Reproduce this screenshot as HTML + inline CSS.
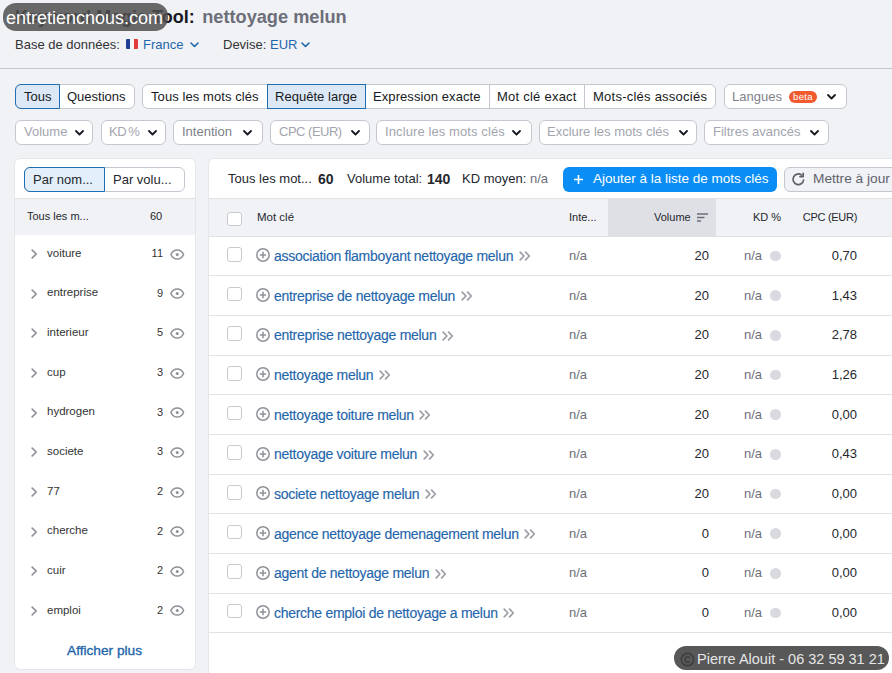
<!DOCTYPE html>
<html><head><meta charset="utf-8">
<style>
*{box-sizing:border-box;margin:0;padding:0}
html,body{width:892px;height:673px;overflow:hidden}
body{background:#f1f2f6;font-family:"Liberation Sans",sans-serif;color:#25272d;position:relative}
.a{position:absolute;white-space:nowrap}
svg{display:block}
.title{left:15px;top:6px;font-size:18px;font-weight:bold;color:#171a22;line-height:22px}
.title .q{color:#6c6e79}
.wm{border-radius:13px;background:rgba(80,80,80,0.9);color:#fff}
.db{top:37px;font-size:13px;color:#333;line-height:16px}
.blue{color:#1f66ab}
.hr{left:0;top:68px;width:892px;height:1px;background:#c6c7cc}
.sg{position:absolute;top:84px;height:25px;border:1px solid #c4c7cf;border-radius:6px;background:#fff}
.sgi{position:absolute;top:-1px;height:25px;line-height:25px;font-size:13px;color:#171a22;white-space:nowrap}
.sgd{position:absolute;top:0;width:1px;height:23px;background:#c4c7cf}
.on{background:#dce8f5;border:1px solid #1f6db3}
.dd{position:absolute;top:120px;height:25px;border:1px solid #c4c7cf;border-radius:6px;background:#fff;font-size:13px;color:#a3a5ae;line-height:21px;white-space:nowrap}
.dd span{position:absolute;top:0}

.panel{position:absolute;left:15px;top:159px;width:180px;height:510px;background:#fff;border-radius:5px;box-shadow:0 0 0 1px #e5e6e9}
.tbl{position:absolute;left:209px;top:159px;width:700px;height:530px;background:#fff;border-radius:5px 0 0 0;box-shadow:0 0 0 1px #e5e6e9}
.t13{font-size:13px;line-height:16px}
.t11{font-size:11px;line-height:14px}
.line{position:absolute;left:209px;width:683px;height:1px;background:#e1e2e5}
.cb{position:absolute;width:14.5px;height:14.5px;border:1px solid #c9cacf;border-radius:3px;background:#fff}
.lk{font-size:14px;letter-spacing:-0.28px;color:#1f66ab;line-height:16px;-webkit-text-stroke:0.15px #1f66ab}
.na{color:#6c6e79}
.dot{position:absolute;width:10.5px;height:10.5px;border-radius:50%;background:#d9dadf}
</style></head><body>

<div class="a title">Keyword Magic Tool: <span class="q" style="margin-left:2.5px;font-size:18.2px">nettoyage melun</span></div>
<div class="a wm" style="left:3px;top:3px;width:165px;height:28px;background:rgba(80,80,80,0.85)"></div>
<div class="a" style="left:6px;top:7px;font-size:18px;line-height:22px;color:#fff">entretiencnous.com</div>
<div class="a db" style="left:15px">Base de données:</div>
<div class="a" style="left:126px;top:39px;width:12px;height:10px;display:flex;border-radius:1px;overflow:hidden"><div style="flex:1;background:#1f3f97"></div><div style="flex:1;background:#f5f5f5"></div><div style="flex:1;background:#e33b3b"></div></div>
<div class="a db blue" style="left:143px">France</div>
<div class="a" style="left:190px;top:42px"><svg width="9" height="6" viewBox="0 0 9 6"><path d="M1 1l3.5 3.5L8 1" fill="none" stroke="#1f66ab" stroke-width="1.6" stroke-linecap="round" stroke-linejoin="round"/></svg></div>
<div class="a db" style="left:223px">Devise:</div>
<div class="a db blue" style="left:270px">EUR</div>
<div class="a" style="left:301px;top:42px"><svg width="9" height="6" viewBox="0 0 9 6"><path d="M1 1l3.5 3.5L8 1" fill="none" stroke="#1f66ab" stroke-width="1.6" stroke-linecap="round" stroke-linejoin="round"/></svg></div>
<div class="a hr"></div>
<div class="sg" style="left:15px;width:120px">
<div class="a on" style="left:-1px;top:-1px;width:45px;height:25px;border-radius:6px 0 0 6px"></div>
<div class="sgi" style="left:8px">Tous</div>
<div class="sgi" style="left:51px">Questions</div>
</div>
<div class="sg" style="left:142px;width:574px">
<div class="a on" style="left:124px;top:-1px;width:99px;height:25px"></div>
<div class="sgi" style="left:8px;letter-spacing:0.08px">Tous les mots clés</div>
<div class="sgi" style="left:132px;letter-spacing:0.03px">Requête large</div>
<div class="sgi" style="left:230px;letter-spacing:0.08px">Expression exacte</div>
<div class="sgi" style="left:354px;letter-spacing:0.24px">Mot clé exact</div>
<div class="sgi" style="left:450px;letter-spacing:0.24px">Mots-clés associés</div>
<div class="sgd" style="left:346px"></div>
<div class="sgd" style="left:441px"></div>
</div>
<div class="sg" style="left:724px;width:123px">
<div class="sgi" style="left:7px;color:#7f818a">Langues</div>
<div class="a" style="left:64px;top:5.5px;width:28px;height:12.5px;border-radius:6px;background:#f25a30;color:#fff;font-size:9.5px;line-height:12.5px;letter-spacing:0.4px;text-align:center">beta</div>
<div class="a" style="left:102px;top:9px"><svg width="9" height="6" viewBox="0 0 9 6"><path d="M1 1l3.5 3.5L8 1" fill="none" stroke="#171a22" stroke-width="1.8" stroke-linecap="round" stroke-linejoin="round"/></svg></div>
</div>
<div class="dd" style="left:15px;width:78px;color:#a3a5ae"><span style="left:8px;letter-spacing:0">Volume</span><div class="a" style="left:59px;top:9px"><svg width="9" height="6" viewBox="0 0 9 6"><path d="M1 1l3.5 3.5L8 1" fill="none" stroke="#171a22" stroke-width="1.8" stroke-linecap="round" stroke-linejoin="round"/></svg></div></div>
<div class="dd" style="left:101px;width:65px;color:#a3a5ae"><span style="left:7px;letter-spacing:-0.3px;word-spacing:-1.5px">KD %</span><div class="a" style="left:46px;top:9px"><svg width="9" height="6" viewBox="0 0 9 6"><path d="M1 1l3.5 3.5L8 1" fill="none" stroke="#171a22" stroke-width="1.8" stroke-linecap="round" stroke-linejoin="round"/></svg></div></div>
<div class="dd" style="left:173px;width:90px;color:#7d7f88"><span style="left:8px;letter-spacing:0">Intention</span><div class="a" style="left:69px;top:9px"><svg width="9" height="6" viewBox="0 0 9 6"><path d="M1 1l3.5 3.5L8 1" fill="none" stroke="#171a22" stroke-width="1.8" stroke-linecap="round" stroke-linejoin="round"/></svg></div></div>
<div class="dd" style="left:270px;width:100px;color:#a3a5ae"><span style="left:8px;letter-spacing:-0.5px">CPC (EUR)</span><div class="a" style="left:80px;top:9px"><svg width="9" height="6" viewBox="0 0 9 6"><path d="M1 1l3.5 3.5L8 1" fill="none" stroke="#171a22" stroke-width="1.8" stroke-linecap="round" stroke-linejoin="round"/></svg></div></div>
<div class="dd" style="left:376px;width:156px;color:#a3a5ae"><span style="left:8px;letter-spacing:0.1px">Inclure les mots clés</span><div class="a" style="left:135px;top:9px"><svg width="9" height="6" viewBox="0 0 9 6"><path d="M1 1l3.5 3.5L8 1" fill="none" stroke="#171a22" stroke-width="1.8" stroke-linecap="round" stroke-linejoin="round"/></svg></div></div>
<div class="dd" style="left:539px;width:158px;color:#a3a5ae"><span style="left:7px;letter-spacing:0">Exclure les mots clés</span><div class="a" style="left:139px;top:9px"><svg width="9" height="6" viewBox="0 0 9 6"><path d="M1 1l3.5 3.5L8 1" fill="none" stroke="#171a22" stroke-width="1.8" stroke-linecap="round" stroke-linejoin="round"/></svg></div></div>
<div class="dd" style="left:704px;width:125px;color:#a3a5ae"><span style="left:8px;letter-spacing:0">Filtres avancés</span><div class="a" style="left:105px;top:9px"><svg width="9" height="6" viewBox="0 0 9 6"><path d="M1 1l3.5 3.5L8 1" fill="none" stroke="#171a22" stroke-width="1.8" stroke-linecap="round" stroke-linejoin="round"/></svg></div></div>
<div class="panel"></div>
<div class="a" style="left:24px;top:167px;width:161px;height:25px;border:1px solid #c4c7cf;border-radius:6px;background:#fff"></div>
<div class="a" style="left:24px;top:167px;width:81px;height:25px;border:1px solid #1f6db3;border-radius:6px 0 0 6px;background:#e3effa"></div>
<div class="a t13" style="left:33px;top:172px">Par nom...</div>
<div class="a t13" style="left:113px;top:172px">Par volu...</div>
<div class="a" style="left:15px;top:198px;width:180px;height:1px;background:#e1e2e5"></div>
<div class="a" style="left:15px;top:199px;width:180px;height:36px;background:#f1f2f6"></div>
<div class="a t11" style="left:27px;top:209px">Tous les m...</div>
<div class="a t11" style="left:150px;top:209px">60</div>
<div class="a" style="left:31px;top:249.0px"><svg width="7" height="10" viewBox="0 0 7 10"><path d="M1.2 1.2l4 3.8-4 3.8" fill="none" stroke="#8f9199" stroke-width="1.7" stroke-linecap="round" stroke-linejoin="round"/></svg></div>
<div class="a t11" style="left:47px;top:245.7px;color:#333;font-size:11.5px">voiture</div>
<div class="a t11" style="right:729px;top:246.0px;color:#333">11</div>
<div class="a" style="left:169.6px;top:248.5px"><svg width="15" height="11" viewBox="0 0 15 11"><path d="M0.9 5.5C2.3 2.3 4.6 0.9 7.25 0.9s4.95 1.4 6.35 4.6c-1.4 3.2-3.7 4.6-6.35 4.6S2.3 8.7 0.9 5.5z" fill="none" stroke="#8f9199" stroke-width="1.5"/><circle cx="7.25" cy="5.5" r="1.5" fill="#8f9199"/></svg></div>
<div class="a" style="left:31px;top:288.7px"><svg width="7" height="10" viewBox="0 0 7 10"><path d="M1.2 1.2l4 3.8-4 3.8" fill="none" stroke="#8f9199" stroke-width="1.7" stroke-linecap="round" stroke-linejoin="round"/></svg></div>
<div class="a t11" style="left:47px;top:285.4px;color:#333;font-size:11.5px">entreprise</div>
<div class="a t11" style="right:729px;top:285.7px;color:#333">9</div>
<div class="a" style="left:169.6px;top:288.2px"><svg width="15" height="11" viewBox="0 0 15 11"><path d="M0.9 5.5C2.3 2.3 4.6 0.9 7.25 0.9s4.95 1.4 6.35 4.6c-1.4 3.2-3.7 4.6-6.35 4.6S2.3 8.7 0.9 5.5z" fill="none" stroke="#8f9199" stroke-width="1.5"/><circle cx="7.25" cy="5.5" r="1.5" fill="#8f9199"/></svg></div>
<div class="a" style="left:31px;top:328.3px"><svg width="7" height="10" viewBox="0 0 7 10"><path d="M1.2 1.2l4 3.8-4 3.8" fill="none" stroke="#8f9199" stroke-width="1.7" stroke-linecap="round" stroke-linejoin="round"/></svg></div>
<div class="a t11" style="left:47px;top:325.0px;color:#333;font-size:11.5px">interieur</div>
<div class="a t11" style="right:729px;top:325.3px;color:#333">5</div>
<div class="a" style="left:169.6px;top:327.8px"><svg width="15" height="11" viewBox="0 0 15 11"><path d="M0.9 5.5C2.3 2.3 4.6 0.9 7.25 0.9s4.95 1.4 6.35 4.6c-1.4 3.2-3.7 4.6-6.35 4.6S2.3 8.7 0.9 5.5z" fill="none" stroke="#8f9199" stroke-width="1.5"/><circle cx="7.25" cy="5.5" r="1.5" fill="#8f9199"/></svg></div>
<div class="a" style="left:31px;top:368.0px"><svg width="7" height="10" viewBox="0 0 7 10"><path d="M1.2 1.2l4 3.8-4 3.8" fill="none" stroke="#8f9199" stroke-width="1.7" stroke-linecap="round" stroke-linejoin="round"/></svg></div>
<div class="a t11" style="left:47px;top:364.7px;color:#333;font-size:11.5px">cup</div>
<div class="a t11" style="right:729px;top:365.0px;color:#333">3</div>
<div class="a" style="left:169.6px;top:367.5px"><svg width="15" height="11" viewBox="0 0 15 11"><path d="M0.9 5.5C2.3 2.3 4.6 0.9 7.25 0.9s4.95 1.4 6.35 4.6c-1.4 3.2-3.7 4.6-6.35 4.6S2.3 8.7 0.9 5.5z" fill="none" stroke="#8f9199" stroke-width="1.5"/><circle cx="7.25" cy="5.5" r="1.5" fill="#8f9199"/></svg></div>
<div class="a" style="left:31px;top:407.6px"><svg width="7" height="10" viewBox="0 0 7 10"><path d="M1.2 1.2l4 3.8-4 3.8" fill="none" stroke="#8f9199" stroke-width="1.7" stroke-linecap="round" stroke-linejoin="round"/></svg></div>
<div class="a t11" style="left:47px;top:404.3px;color:#333;font-size:11.5px">hydrogen</div>
<div class="a t11" style="right:729px;top:404.6px;color:#333">3</div>
<div class="a" style="left:169.6px;top:407.1px"><svg width="15" height="11" viewBox="0 0 15 11"><path d="M0.9 5.5C2.3 2.3 4.6 0.9 7.25 0.9s4.95 1.4 6.35 4.6c-1.4 3.2-3.7 4.6-6.35 4.6S2.3 8.7 0.9 5.5z" fill="none" stroke="#8f9199" stroke-width="1.5"/><circle cx="7.25" cy="5.5" r="1.5" fill="#8f9199"/></svg></div>
<div class="a" style="left:31px;top:447.3px"><svg width="7" height="10" viewBox="0 0 7 10"><path d="M1.2 1.2l4 3.8-4 3.8" fill="none" stroke="#8f9199" stroke-width="1.7" stroke-linecap="round" stroke-linejoin="round"/></svg></div>
<div class="a t11" style="left:47px;top:444.0px;color:#333;font-size:11.5px">societe</div>
<div class="a t11" style="right:729px;top:444.3px;color:#333">3</div>
<div class="a" style="left:169.6px;top:446.8px"><svg width="15" height="11" viewBox="0 0 15 11"><path d="M0.9 5.5C2.3 2.3 4.6 0.9 7.25 0.9s4.95 1.4 6.35 4.6c-1.4 3.2-3.7 4.6-6.35 4.6S2.3 8.7 0.9 5.5z" fill="none" stroke="#8f9199" stroke-width="1.5"/><circle cx="7.25" cy="5.5" r="1.5" fill="#8f9199"/></svg></div>
<div class="a" style="left:31px;top:487.0px"><svg width="7" height="10" viewBox="0 0 7 10"><path d="M1.2 1.2l4 3.8-4 3.8" fill="none" stroke="#8f9199" stroke-width="1.7" stroke-linecap="round" stroke-linejoin="round"/></svg></div>
<div class="a t11" style="left:47px;top:483.7px;color:#333;font-size:11.5px">77</div>
<div class="a t11" style="right:729px;top:484.0px;color:#333">2</div>
<div class="a" style="left:169.6px;top:486.5px"><svg width="15" height="11" viewBox="0 0 15 11"><path d="M0.9 5.5C2.3 2.3 4.6 0.9 7.25 0.9s4.95 1.4 6.35 4.6c-1.4 3.2-3.7 4.6-6.35 4.6S2.3 8.7 0.9 5.5z" fill="none" stroke="#8f9199" stroke-width="1.5"/><circle cx="7.25" cy="5.5" r="1.5" fill="#8f9199"/></svg></div>
<div class="a" style="left:31px;top:526.6px"><svg width="7" height="10" viewBox="0 0 7 10"><path d="M1.2 1.2l4 3.8-4 3.8" fill="none" stroke="#8f9199" stroke-width="1.7" stroke-linecap="round" stroke-linejoin="round"/></svg></div>
<div class="a t11" style="left:47px;top:523.3px;color:#333;font-size:11.5px">cherche</div>
<div class="a t11" style="right:729px;top:523.6px;color:#333">2</div>
<div class="a" style="left:169.6px;top:526.1px"><svg width="15" height="11" viewBox="0 0 15 11"><path d="M0.9 5.5C2.3 2.3 4.6 0.9 7.25 0.9s4.95 1.4 6.35 4.6c-1.4 3.2-3.7 4.6-6.35 4.6S2.3 8.7 0.9 5.5z" fill="none" stroke="#8f9199" stroke-width="1.5"/><circle cx="7.25" cy="5.5" r="1.5" fill="#8f9199"/></svg></div>
<div class="a" style="left:31px;top:566.3px"><svg width="7" height="10" viewBox="0 0 7 10"><path d="M1.2 1.2l4 3.8-4 3.8" fill="none" stroke="#8f9199" stroke-width="1.7" stroke-linecap="round" stroke-linejoin="round"/></svg></div>
<div class="a t11" style="left:47px;top:563.0px;color:#333;font-size:11.5px">cuir</div>
<div class="a t11" style="right:729px;top:563.3px;color:#333">2</div>
<div class="a" style="left:169.6px;top:565.8px"><svg width="15" height="11" viewBox="0 0 15 11"><path d="M0.9 5.5C2.3 2.3 4.6 0.9 7.25 0.9s4.95 1.4 6.35 4.6c-1.4 3.2-3.7 4.6-6.35 4.6S2.3 8.7 0.9 5.5z" fill="none" stroke="#8f9199" stroke-width="1.5"/><circle cx="7.25" cy="5.5" r="1.5" fill="#8f9199"/></svg></div>
<div class="a" style="left:31px;top:605.9px"><svg width="7" height="10" viewBox="0 0 7 10"><path d="M1.2 1.2l4 3.8-4 3.8" fill="none" stroke="#8f9199" stroke-width="1.7" stroke-linecap="round" stroke-linejoin="round"/></svg></div>
<div class="a t11" style="left:47px;top:602.6px;color:#333;font-size:11.5px">emploi</div>
<div class="a t11" style="right:729px;top:602.9px;color:#333">2</div>
<div class="a" style="left:169.6px;top:605.4px"><svg width="15" height="11" viewBox="0 0 15 11"><path d="M0.9 5.5C2.3 2.3 4.6 0.9 7.25 0.9s4.95 1.4 6.35 4.6c-1.4 3.2-3.7 4.6-6.35 4.6S2.3 8.7 0.9 5.5z" fill="none" stroke="#8f9199" stroke-width="1.5"/><circle cx="7.25" cy="5.5" r="1.5" fill="#8f9199"/></svg></div>
<div class="a" style="left:67px;top:643px;font-size:13.7px;line-height:16px;color:#1f66ab;-webkit-text-stroke:0.35px #1f66ab">Afficher plus</div>
<div class="tbl"></div>
<div class="a t13" style="left:228px;top:171px">Tous les mot...</div>
<div class="a" style="left:318px;top:171px;font-size:14px;line-height:16px;font-weight:bold">60</div>
<div class="a t13" style="left:347px;top:171px">Volume total:</div>
<div class="a" style="left:427px;top:171px;font-size:14px;line-height:16px;font-weight:bold">140</div>
<div class="a t13" style="left:462px;top:171px">KD moyen: <span class="na">n/a</span></div>
<div class="a" style="left:563px;top:167px;width:214px;height:25px;border-radius:6px;background:#0a8ef5"></div>
<div class="a" style="left:574px;top:175px"><svg width="9" height="9" viewBox="0 0 9 9"><path d="M4.5 0v9M0 4.5h9" stroke="#fff" stroke-width="1.6"/></svg></div>
<div class="a" style="left:593px;top:171px;font-size:13.5px;line-height:16px;color:#fff">Ajouter à la liste de mots clés</div>
<div class="a" style="left:784px;top:167px;width:120px;height:25px;border-radius:6px;background:#f1f2f6;border:1px solid #c4c7cf"></div>
<div class="a" style="left:791px;top:172px"><svg width="15" height="15" viewBox="0 0 15 15"><path d="M12.6 8A5.3 5.3 0 1 1 10.6 3.1" fill="none" stroke="#5f616a" stroke-width="1.7" stroke-linecap="round"/><path d="M12.2 1.4v3.2H9" fill="none" stroke="#5f616a" stroke-width="1.7" stroke-linecap="round" stroke-linejoin="round"/></svg></div>
<div class="a" style="left:813px;top:171px;font-size:13.7px;line-height:16px;color:#5f616a">Mettre à jour</div>
<div class="a" style="left:209px;top:198px;width:683px;height:1px;background:#e1e2e5"></div>
<div class="a" style="left:209px;top:199px;width:683px;height:37px;background:#f1f2f6"></div>
<div class="a" style="left:608px;top:199px;width:108px;height:37px;background:#dfe0e6"></div>
<div class="a" style="left:209px;top:236px;width:683px;height:1px;background:#e1e2e5"></div>
<div class="cb" style="left:227px;top:211.6px"></div>
<div class="a t11" style="left:257px;top:209.6px;font-size:11.5px">Mot clé</div>
<div class="a t11" style="left:569px;top:210px">Inte...</div>
<div class="a t11" style="left:654px;top:210px">Volume</div>
<div class="a" style="left:697px;top:213px"><svg width="11" height="9" viewBox="0 0 11 9"><path d="M0 1h11M0 4.5h7.5M0 8h4" stroke="#6c6e79" stroke-width="1.5"/></svg></div>
<div class="a t11" style="right:111px;top:210px">KD %</div>
<div class="a t11" style="right:35px;top:210px;letter-spacing:-0.3px">CPC (EUR)</div>
<div class="line" style="top:275px"></div>
<div class="cb" style="left:227px;top:247.0px"></div>
<div class="a" style="left:256px;top:248.3px"><svg width="15" height="15" viewBox="0 0 15 15"><circle cx="7" cy="7" r="6.2" fill="none" stroke="#8f9199" stroke-width="1.5"/><path d="M7 3.8v6.4M3.8 7h6.4" stroke="#8f9199" stroke-width="1.5"/></svg></div>
<div class="a lk" style="left:274px;top:248.0px">association flamboyant nettoyage melun<span style="display:inline-block;vertical-align:middle;margin-left:5.5px;margin-top:-2px"><svg width="12" height="10" viewBox="0 0 12 10"><path d="M1.2 1.2l3.7 3.8-3.7 3.8M6.6 1.2l3.7 3.8-3.7 3.8" fill="none" stroke="#9c9ea6" stroke-width="1.7" stroke-linecap="round" stroke-linejoin="round"/></svg></span></div>
<div class="a na t13" style="left:569px;top:248.0px">n/a</div>
<div class="a t13" style="right:183px;top:248.0px">20</div>
<div class="a na t13" style="left:744px;top:248.0px">n/a</div>
<div class="dot" style="left:770px;top:250.7px"></div>
<div class="a t13" style="right:35px;top:248.0px">0,70</div>
<div class="line" style="top:315px"></div>
<div class="cb" style="left:227px;top:286.7px"></div>
<div class="a" style="left:256px;top:288.0px"><svg width="15" height="15" viewBox="0 0 15 15"><circle cx="7" cy="7" r="6.2" fill="none" stroke="#8f9199" stroke-width="1.5"/><path d="M7 3.8v6.4M3.8 7h6.4" stroke="#8f9199" stroke-width="1.5"/></svg></div>
<div class="a lk" style="left:274px;top:287.7px">entreprise de nettoyage melun<span style="display:inline-block;vertical-align:middle;margin-left:5.5px;margin-top:-2px"><svg width="12" height="10" viewBox="0 0 12 10"><path d="M1.2 1.2l3.7 3.8-3.7 3.8M6.6 1.2l3.7 3.8-3.7 3.8" fill="none" stroke="#9c9ea6" stroke-width="1.7" stroke-linecap="round" stroke-linejoin="round"/></svg></span></div>
<div class="a na t13" style="left:569px;top:287.7px">n/a</div>
<div class="a t13" style="right:183px;top:287.7px">20</div>
<div class="a na t13" style="left:744px;top:287.7px">n/a</div>
<div class="dot" style="left:770px;top:290.4px"></div>
<div class="a t13" style="right:35px;top:287.7px">1,43</div>
<div class="line" style="top:355px"></div>
<div class="cb" style="left:227px;top:326.3px"></div>
<div class="a" style="left:256px;top:327.6px"><svg width="15" height="15" viewBox="0 0 15 15"><circle cx="7" cy="7" r="6.2" fill="none" stroke="#8f9199" stroke-width="1.5"/><path d="M7 3.8v6.4M3.8 7h6.4" stroke="#8f9199" stroke-width="1.5"/></svg></div>
<div class="a lk" style="left:274px;top:327.3px">entreprise nettoyage melun<span style="display:inline-block;vertical-align:middle;margin-left:5.5px;margin-top:-2px"><svg width="12" height="10" viewBox="0 0 12 10"><path d="M1.2 1.2l3.7 3.8-3.7 3.8M6.6 1.2l3.7 3.8-3.7 3.8" fill="none" stroke="#9c9ea6" stroke-width="1.7" stroke-linecap="round" stroke-linejoin="round"/></svg></span></div>
<div class="a na t13" style="left:569px;top:327.3px">n/a</div>
<div class="a t13" style="right:183px;top:327.3px">20</div>
<div class="a na t13" style="left:744px;top:327.3px">n/a</div>
<div class="dot" style="left:770px;top:330.0px"></div>
<div class="a t13" style="right:35px;top:327.3px">2,78</div>
<div class="line" style="top:394px"></div>
<div class="cb" style="left:227px;top:366.0px"></div>
<div class="a" style="left:256px;top:367.3px"><svg width="15" height="15" viewBox="0 0 15 15"><circle cx="7" cy="7" r="6.2" fill="none" stroke="#8f9199" stroke-width="1.5"/><path d="M7 3.8v6.4M3.8 7h6.4" stroke="#8f9199" stroke-width="1.5"/></svg></div>
<div class="a lk" style="left:274px;top:367.0px">nettoyage melun<span style="display:inline-block;vertical-align:middle;margin-left:5.5px;margin-top:-2px"><svg width="12" height="10" viewBox="0 0 12 10"><path d="M1.2 1.2l3.7 3.8-3.7 3.8M6.6 1.2l3.7 3.8-3.7 3.8" fill="none" stroke="#9c9ea6" stroke-width="1.7" stroke-linecap="round" stroke-linejoin="round"/></svg></span></div>
<div class="a na t13" style="left:569px;top:367.0px">n/a</div>
<div class="a t13" style="right:183px;top:367.0px">20</div>
<div class="a na t13" style="left:744px;top:367.0px">n/a</div>
<div class="dot" style="left:770px;top:369.7px"></div>
<div class="a t13" style="right:35px;top:367.0px">1,26</div>
<div class="line" style="top:434px"></div>
<div class="cb" style="left:227px;top:405.6px"></div>
<div class="a" style="left:256px;top:406.9px"><svg width="15" height="15" viewBox="0 0 15 15"><circle cx="7" cy="7" r="6.2" fill="none" stroke="#8f9199" stroke-width="1.5"/><path d="M7 3.8v6.4M3.8 7h6.4" stroke="#8f9199" stroke-width="1.5"/></svg></div>
<div class="a lk" style="left:274px;top:406.6px">nettoyage toiture melun<span style="display:inline-block;vertical-align:middle;margin-left:5.5px;margin-top:-2px"><svg width="12" height="10" viewBox="0 0 12 10"><path d="M1.2 1.2l3.7 3.8-3.7 3.8M6.6 1.2l3.7 3.8-3.7 3.8" fill="none" stroke="#9c9ea6" stroke-width="1.7" stroke-linecap="round" stroke-linejoin="round"/></svg></span></div>
<div class="a na t13" style="left:569px;top:406.6px">n/a</div>
<div class="a t13" style="right:183px;top:406.6px">20</div>
<div class="a na t13" style="left:744px;top:406.6px">n/a</div>
<div class="dot" style="left:770px;top:409.3px"></div>
<div class="a t13" style="right:35px;top:406.6px">0,00</div>
<div class="line" style="top:474px"></div>
<div class="cb" style="left:227px;top:445.3px"></div>
<div class="a" style="left:256px;top:446.6px"><svg width="15" height="15" viewBox="0 0 15 15"><circle cx="7" cy="7" r="6.2" fill="none" stroke="#8f9199" stroke-width="1.5"/><path d="M7 3.8v6.4M3.8 7h6.4" stroke="#8f9199" stroke-width="1.5"/></svg></div>
<div class="a lk" style="left:274px;top:446.3px">nettoyage voiture melun<span style="display:inline-block;vertical-align:middle;margin-left:5.5px;margin-top:-2px"><svg width="12" height="10" viewBox="0 0 12 10"><path d="M1.2 1.2l3.7 3.8-3.7 3.8M6.6 1.2l3.7 3.8-3.7 3.8" fill="none" stroke="#9c9ea6" stroke-width="1.7" stroke-linecap="round" stroke-linejoin="round"/></svg></span></div>
<div class="a na t13" style="left:569px;top:446.3px">n/a</div>
<div class="a t13" style="right:183px;top:446.3px">20</div>
<div class="a na t13" style="left:744px;top:446.3px">n/a</div>
<div class="dot" style="left:770px;top:449.0px"></div>
<div class="a t13" style="right:35px;top:446.3px">0,43</div>
<div class="line" style="top:513px"></div>
<div class="cb" style="left:227px;top:485.0px"></div>
<div class="a" style="left:256px;top:486.3px"><svg width="15" height="15" viewBox="0 0 15 15"><circle cx="7" cy="7" r="6.2" fill="none" stroke="#8f9199" stroke-width="1.5"/><path d="M7 3.8v6.4M3.8 7h6.4" stroke="#8f9199" stroke-width="1.5"/></svg></div>
<div class="a lk" style="left:274px;top:486.0px">societe nettoyage melun<span style="display:inline-block;vertical-align:middle;margin-left:5.5px;margin-top:-2px"><svg width="12" height="10" viewBox="0 0 12 10"><path d="M1.2 1.2l3.7 3.8-3.7 3.8M6.6 1.2l3.7 3.8-3.7 3.8" fill="none" stroke="#9c9ea6" stroke-width="1.7" stroke-linecap="round" stroke-linejoin="round"/></svg></span></div>
<div class="a na t13" style="left:569px;top:486.0px">n/a</div>
<div class="a t13" style="right:183px;top:486.0px">20</div>
<div class="a na t13" style="left:744px;top:486.0px">n/a</div>
<div class="dot" style="left:770px;top:488.7px"></div>
<div class="a t13" style="right:35px;top:486.0px">0,00</div>
<div class="line" style="top:553px"></div>
<div class="cb" style="left:227px;top:524.6px"></div>
<div class="a" style="left:256px;top:525.9px"><svg width="15" height="15" viewBox="0 0 15 15"><circle cx="7" cy="7" r="6.2" fill="none" stroke="#8f9199" stroke-width="1.5"/><path d="M7 3.8v6.4M3.8 7h6.4" stroke="#8f9199" stroke-width="1.5"/></svg></div>
<div class="a lk" style="left:274px;top:525.6px">agence nettoyage demenagement melun<span style="display:inline-block;vertical-align:middle;margin-left:5.5px;margin-top:-2px"><svg width="12" height="10" viewBox="0 0 12 10"><path d="M1.2 1.2l3.7 3.8-3.7 3.8M6.6 1.2l3.7 3.8-3.7 3.8" fill="none" stroke="#9c9ea6" stroke-width="1.7" stroke-linecap="round" stroke-linejoin="round"/></svg></span></div>
<div class="a na t13" style="left:569px;top:525.6px">n/a</div>
<div class="a t13" style="right:183px;top:525.6px">0</div>
<div class="a na t13" style="left:744px;top:525.6px">n/a</div>
<div class="dot" style="left:770px;top:528.3px"></div>
<div class="a t13" style="right:35px;top:525.6px">0,00</div>
<div class="line" style="top:593px"></div>
<div class="cb" style="left:227px;top:564.3px"></div>
<div class="a" style="left:256px;top:565.6px"><svg width="15" height="15" viewBox="0 0 15 15"><circle cx="7" cy="7" r="6.2" fill="none" stroke="#8f9199" stroke-width="1.5"/><path d="M7 3.8v6.4M3.8 7h6.4" stroke="#8f9199" stroke-width="1.5"/></svg></div>
<div class="a lk" style="left:274px;top:565.3px">agent de nettoyage melun<span style="display:inline-block;vertical-align:middle;margin-left:5.5px;margin-top:-2px"><svg width="12" height="10" viewBox="0 0 12 10"><path d="M1.2 1.2l3.7 3.8-3.7 3.8M6.6 1.2l3.7 3.8-3.7 3.8" fill="none" stroke="#9c9ea6" stroke-width="1.7" stroke-linecap="round" stroke-linejoin="round"/></svg></span></div>
<div class="a na t13" style="left:569px;top:565.3px">n/a</div>
<div class="a t13" style="right:183px;top:565.3px">0</div>
<div class="a na t13" style="left:744px;top:565.3px">n/a</div>
<div class="dot" style="left:770px;top:568.0px"></div>
<div class="a t13" style="right:35px;top:565.3px">0,00</div>
<div class="line" style="top:632px"></div>
<div class="cb" style="left:227px;top:603.9px"></div>
<div class="a" style="left:256px;top:605.2px"><svg width="15" height="15" viewBox="0 0 15 15"><circle cx="7" cy="7" r="6.2" fill="none" stroke="#8f9199" stroke-width="1.5"/><path d="M7 3.8v6.4M3.8 7h6.4" stroke="#8f9199" stroke-width="1.5"/></svg></div>
<div class="a lk" style="left:274px;top:604.9px">cherche emploi de nettoyage a melun<span style="display:inline-block;vertical-align:middle;margin-left:5.5px;margin-top:-2px"><svg width="12" height="10" viewBox="0 0 12 10"><path d="M1.2 1.2l3.7 3.8-3.7 3.8M6.6 1.2l3.7 3.8-3.7 3.8" fill="none" stroke="#9c9ea6" stroke-width="1.7" stroke-linecap="round" stroke-linejoin="round"/></svg></span></div>
<div class="a na t13" style="left:569px;top:604.9px">n/a</div>
<div class="a t13" style="right:183px;top:604.9px">0</div>
<div class="a na t13" style="left:744px;top:604.9px">n/a</div>
<div class="dot" style="left:770px;top:607.6px"></div>
<div class="a t13" style="right:35px;top:604.9px">0,00</div>
<div class="a wm" style="left:674px;top:646px;width:215px;height:24px;border-radius:12px;background:rgba(70,70,70,0.9)"></div>
<div class="a" style="left:679.5px;top:651.5px"><svg width="15" height="15" viewBox="0 0 15 15"><circle cx="7.5" cy="7.5" r="6.2" fill="none" stroke="#3d3d3d" stroke-width="1.5"/><path d="M9.6 5.6A2.7 2.7 0 1 0 9.6 9.4" fill="none" stroke="#3d3d3d" stroke-width="1.4"/></svg></div>
<div class="a" style="left:697px;top:651px;font-size:14.5px;line-height:17px;color:#e6e6e6">Pierre Alouit - 06 32 59 31 21</div>
</body></html>
